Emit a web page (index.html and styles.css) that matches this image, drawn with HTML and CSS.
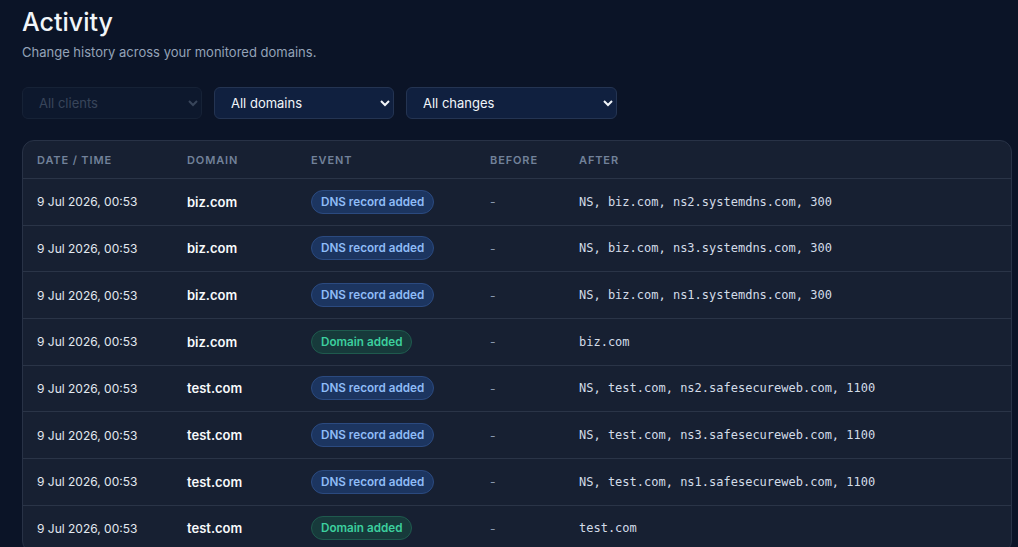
FILE: index.html
```html
<!DOCTYPE html>
<html lang="en">
<head>
  <meta charset="UTF-8" />
  <meta name="viewport" content="width=device-width, initial-scale=1.0"/>
  <title>Activity</title>
  <link rel="stylesheet" href="styles.css">
</head>
<body>
  <main class="page">
    <h1 class="title">Activity</h1>
    <p class="subtitle">Change history across your monitored domains.</p>

    <div class="filters">
      <select class="filter filter-client" disabled>
        <option>All clients</option>
      </select>
      <select class="filter filter-domain">
        <option>All domains</option>
      </select>
      <select class="filter filter-change">
        <option>All changes</option>
      </select>
    </div>

    <div class="card">
      <table class="log">
        <thead>
          <tr>
            <th class="col-date">Date / Time</th>
            <th class="col-domain">Domain</th>
            <th class="col-event">Event</th>
            <th class="col-before">Before</th>
            <th>After</th>
          </tr>
        </thead>
        <tbody>
          <tr>
            <td>9 Jul 2026, 00:53</td>
            <td class="domain">biz.com</td>
            <td><span class="badge badge-dns">DNS record added</span></td>
            <td class="muted">-</td>
            <td class="mono">NS, biz.com, ns2.systemdns.com, 300</td>
          </tr>
          <tr>
            <td>9 Jul 2026, 00:53</td>
            <td class="domain">biz.com</td>
            <td><span class="badge badge-dns">DNS record added</span></td>
            <td class="muted">-</td>
            <td class="mono">NS, biz.com, ns3.systemdns.com, 300</td>
          </tr>
          <tr>
            <td>9 Jul 2026, 00:53</td>
            <td class="domain">biz.com</td>
            <td><span class="badge badge-dns">DNS record added</span></td>
            <td class="muted">-</td>
            <td class="mono">NS, biz.com, ns1.systemdns.com, 300</td>
          </tr>
          <tr>
            <td>9 Jul 2026, 00:53</td>
            <td class="domain">biz.com</td>
            <td><span class="badge badge-domain">Domain added</span></td>
            <td class="muted">-</td>
            <td class="mono">biz.com</td>
          </tr>
          <tr>
            <td>9 Jul 2026, 00:53</td>
            <td class="domain">test.com</td>
            <td><span class="badge badge-dns">DNS record added</span></td>
            <td class="muted">-</td>
            <td class="mono">NS, test.com, ns2.safesecureweb.com, 1100</td>
          </tr>
          <tr>
            <td>9 Jul 2026, 00:53</td>
            <td class="domain">test.com</td>
            <td><span class="badge badge-dns">DNS record added</span></td>
            <td class="muted">-</td>
            <td class="mono">NS, test.com, ns3.safesecureweb.com, 1100</td>
          </tr>
          <tr>
            <td>9 Jul 2026, 00:53</td>
            <td class="domain">test.com</td>
            <td><span class="badge badge-dns">DNS record added</span></td>
            <td class="muted">-</td>
            <td class="mono">NS, test.com, ns1.safesecureweb.com, 1100</td>
          </tr>
          <tr>
            <td>9 Jul 2026, 00:53</td>
            <td class="domain">test.com</td>
            <td><span class="badge badge-domain">Domain added</span></td>
            <td class="muted">-</td>
            <td class="mono">test.com</td>
          </tr>
        </tbody>
      </table>
    </div>
  </main>
</body>
</html>
```

FILE: styles.css
```css
html, body {
  margin: 0;
  padding: 0;
  height: 100%;
  overflow: hidden;
  background: #0b1427;
  color: #e2e8f0;
  font-family: Inter, "Noto Sans", sans-serif;
  color-scheme: dark;
}

.page {
  padding: 6px 6px 0 22px;
}

.title {
  margin: 0;
  font-size: 25px;
  font-weight: 500;
  line-height: 32px;
  color: #f1f5f9;
}

.subtitle {
  margin: 5px 0 0;
  font-size: 13px;
  line-height: 18px;
  color: #94a3b8;
}

.filters {
  display: flex;
  gap: 12px;
  margin-top: 26px;
}

.filter {
  box-sizing: border-box;
  height: 32px;
  padding: 0 8px 0 12px;
  background: #10203f;
  color: #f1f5f9;
  border: 1px solid #243452;
  border-radius: 6px;
  font-family: inherit;
  font-size: 13px;
}

.filter-client {
  width: 180px;
  background: #0f1a30;
  color: #4b5a70;
  border-color: #1c283d;
}
.filter-domain { width: 180px; }
.filter-change { width: 211px; }

.card {
  margin-top: 21px;
  background: #172032;
  border: 1px solid #283246;
  border-radius: 12px;
  overflow: hidden;
}

.log {
  width: 100%;
  border-collapse: collapse;
  font-size: 12px;
}

.log th {
  height: 37px;
  padding: 0 14px;
  text-align: left;
  font-size: 11px;
  font-weight: 600;
  letter-spacing: 0.08em;
  text-transform: uppercase;
  color: #72829a;
  border-bottom: 1px solid #2a3447;
}

.log td {
  height: 45.67px;
  padding: 0 14px;
  border-bottom: 1px solid #2a3447;
  color: #e2e8f0;
  white-space: nowrap;
}

.col-date { width: 122px; }
.col-domain { width: 96px; }
.col-event { width: 151px; }
.col-before { width: 61px; }

.log td.domain {
  font-size: 13px;
  font-weight: 600;
  color: #f8fafc;
}

.log td.muted {
  color: #8a99ae;
}

.log td.mono {
  font-family: "DejaVu Sans Mono", monospace;
  font-size: 12px;
  color: #d3dce8;
}

.badge {
  display: inline-block;
  padding: 4px 9px;
  border-radius: 999px;
  font-size: 11.7px;
  font-weight: 600;
  line-height: 14px;
  border: 1px solid;
}

.badge-dns {
  background: #1c3560;
  border-color: #2b4a80;
  color: #8fbcf7;
}

.badge-domain {
  background: #173a3b;
  border-color: #1f5a4e;
  color: #3ccf9e;
}
```
